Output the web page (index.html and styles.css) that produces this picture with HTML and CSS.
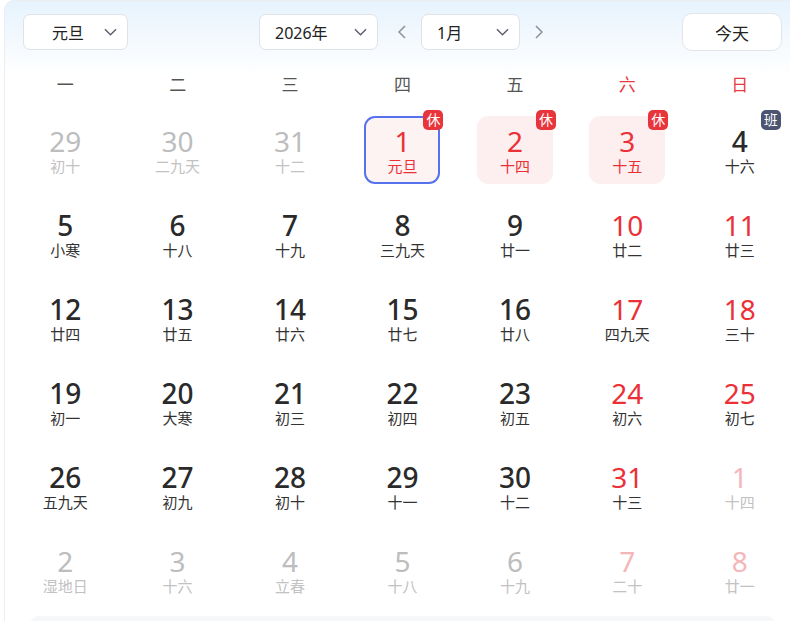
FILE: index.html
```html
<!DOCTYPE html>
<html lang="zh-CN">
<head>
  <meta charset="UTF-8" />
  <title>万年历</title>
  <link rel="stylesheet" href="styles.css">
</head>
<body>
  <div class="calendar">
    <div class="toolbar">
      <div class="select select-holiday">
        <span>元旦</span>
        <svg class="chevron" viewBox="0 0 14 8"><path d="M1 1l6 6 6-6" /></svg>
      </div>

      <div class="nav">
        <div class="select select-year">
          <span>2026年</span>
          <svg class="chevron" viewBox="0 0 14 8"><path d="M1 1l6 6 6-6" /></svg>
        </div>
        <div class="arrow arrow-prev">
          <svg viewBox="0 0 8 14"><path d="M7 1L1 7l6 6" /></svg>
        </div>
        <div class="select select-month">
          <span>1月</span>
          <svg class="chevron" viewBox="0 0 14 8"><path d="M1 1l6 6 6-6" /></svg>
        </div>
        <div class="arrow arrow-next">
          <svg viewBox="0 0 8 14"><path d="M1 1l6 6-6 6" /></svg>
        </div>
      </div>

      <button class="today-btn">今天</button>
    </div>

    <div class="weekdays">
      <div>一</div>
      <div>二</div>
      <div>三</div>
      <div>四</div>
      <div>五</div>
      <div class="weekend">六</div>
      <div class="weekend">日</div>
    </div>

    <div class="days">
      <!-- row 1 -->
      <div class="cell other"><div class="day"><span class="num">29</span><span class="lunar">初十</span></div></div>
      <div class="cell other"><div class="day"><span class="num">30</span><span class="lunar">二九天</span></div></div>
      <div class="cell other"><div class="day"><span class="num">31</span><span class="lunar">十二</span></div></div>
      <div class="cell holiday selected"><div class="day"><span class="num">1</span><span class="lunar">元旦</span><span class="badge rest">休</span></div></div>
      <div class="cell holiday"><div class="day"><span class="num">2</span><span class="lunar">十四</span><span class="badge rest">休</span></div></div>
      <div class="cell holiday"><div class="day"><span class="num">3</span><span class="lunar">十五</span><span class="badge rest">休</span></div></div>
      <div class="cell"><div class="day"><span class="num">4</span><span class="lunar">十六</span><span class="badge work">班</span></div></div>

      <!-- row 2 -->
      <div class="cell"><div class="day"><span class="num">5</span><span class="lunar">小寒</span></div></div>
      <div class="cell"><div class="day"><span class="num">6</span><span class="lunar">十八</span></div></div>
      <div class="cell"><div class="day"><span class="num">7</span><span class="lunar">十九</span></div></div>
      <div class="cell"><div class="day"><span class="num">8</span><span class="lunar">三九天</span></div></div>
      <div class="cell"><div class="day"><span class="num">9</span><span class="lunar">廿一</span></div></div>
      <div class="cell weekend"><div class="day"><span class="num">10</span><span class="lunar">廿二</span></div></div>
      <div class="cell weekend"><div class="day"><span class="num">11</span><span class="lunar">廿三</span></div></div>

      <!-- row 3 -->
      <div class="cell"><div class="day"><span class="num">12</span><span class="lunar">廿四</span></div></div>
      <div class="cell"><div class="day"><span class="num">13</span><span class="lunar">廿五</span></div></div>
      <div class="cell"><div class="day"><span class="num">14</span><span class="lunar">廿六</span></div></div>
      <div class="cell"><div class="day"><span class="num">15</span><span class="lunar">廿七</span></div></div>
      <div class="cell"><div class="day"><span class="num">16</span><span class="lunar">廿八</span></div></div>
      <div class="cell weekend"><div class="day"><span class="num">17</span><span class="lunar">四九天</span></div></div>
      <div class="cell weekend"><div class="day"><span class="num">18</span><span class="lunar">三十</span></div></div>

      <!-- row 4 -->
      <div class="cell"><div class="day"><span class="num">19</span><span class="lunar">初一</span></div></div>
      <div class="cell"><div class="day"><span class="num">20</span><span class="lunar">大寒</span></div></div>
      <div class="cell"><div class="day"><span class="num">21</span><span class="lunar">初三</span></div></div>
      <div class="cell"><div class="day"><span class="num">22</span><span class="lunar">初四</span></div></div>
      <div class="cell"><div class="day"><span class="num">23</span><span class="lunar">初五</span></div></div>
      <div class="cell weekend"><div class="day"><span class="num">24</span><span class="lunar">初六</span></div></div>
      <div class="cell weekend"><div class="day"><span class="num">25</span><span class="lunar">初七</span></div></div>

      <!-- row 5 -->
      <div class="cell"><div class="day"><span class="num">26</span><span class="lunar">五九天</span></div></div>
      <div class="cell"><div class="day"><span class="num">27</span><span class="lunar">初九</span></div></div>
      <div class="cell"><div class="day"><span class="num">28</span><span class="lunar">初十</span></div></div>
      <div class="cell"><div class="day"><span class="num">29</span><span class="lunar">十一</span></div></div>
      <div class="cell"><div class="day"><span class="num">30</span><span class="lunar">十二</span></div></div>
      <div class="cell weekend"><div class="day"><span class="num">31</span><span class="lunar">十三</span></div></div>
      <div class="cell other weekend"><div class="day"><span class="num">1</span><span class="lunar">十四</span></div></div>

      <!-- row 6 -->
      <div class="cell other"><div class="day"><span class="num">2</span><span class="lunar">湿地日</span></div></div>
      <div class="cell other"><div class="day"><span class="num">3</span><span class="lunar">十六</span></div></div>
      <div class="cell other"><div class="day"><span class="num">4</span><span class="lunar">立春</span></div></div>
      <div class="cell other"><div class="day"><span class="num">5</span><span class="lunar">十八</span></div></div>
      <div class="cell other"><div class="day"><span class="num">6</span><span class="lunar">十九</span></div></div>
      <div class="cell other weekend"><div class="day"><span class="num">7</span><span class="lunar">二十</span></div></div>
      <div class="cell other weekend"><div class="day"><span class="num">8</span><span class="lunar">廿一</span></div></div>
    </div>

    <div class="footer"></div>
  </div>
</body>
</html>
```

FILE: styles.css
```css
* {
  margin: 0;
  padding: 0;
  box-sizing: border-box;
}

body {
  background: #fff;
  overflow: hidden;
  font-family: 'Noto Sans', 'Noto Sans CJK SC', sans-serif;
  color: #222;
}

.calendar {
  width: 797px;
  margin-left: 4px;
  padding: 12px 18px 0;
  border: 1px solid #ebedf0;
  border-radius: 10px;
  background: linear-gradient(180deg, #e6f3fd 0, #f4f9fe 40px, #fff 75px);
}

/* Toolbar */
.toolbar {
  display: flex;
  justify-content: space-between;
  align-items: center;
  height: 38px;
}

.nav {
  display: flex;
  align-items: center;
}

.select {
  display: flex;
  align-items: center;
  justify-content: space-between;
  height: 36px;
  padding: 0 10px 0 15px;
  background-color: #fff;
  border: 1px solid #dfe2e7;
  border-radius: 7px;
  font-size: 16px;
  color: #222;
}

.select-holiday {
  width: 105px;
  padding-left: 28px;
}

.select-year { width: 119px; }
.select-month { width: 99px; }

.chevron {
  width: 13px;
  height: 8px;
  fill: none;
  stroke: #5a5f6a;
  stroke-width: 1.5;
}

.arrow {
  display: flex;
  justify-content: center;
  align-items: center;
  width: 24px;
  height: 36px;
}

.arrow-prev { margin: 0 7px 0 12px; }
.arrow-next { margin-left: 7px; }

.arrow svg {
  width: 8px;
  height: 14px;
  fill: none;
  stroke: #8a8f99;
  stroke-width: 1.5;
}

.today-btn {
  width: 100px;
  height: 38px;
  background-color: #fff;
  border: 1px solid #e3e5e9;
  border-radius: 10px;
  font-family: inherit;
  font-size: 17px;
  color: #222;
}

/* Weekday header */
.weekdays {
  display: grid;
  grid-template-columns: repeat(7, 1fr);
  margin: 12px -14px 5px;
  height: 40px;
  align-items: center;
  text-align: center;
  font-size: 17px;
  color: #555;
}

.weekdays .weekend { color: #ea3a40; }

/* Day grid */
.days {
  display: grid;
  grid-template-columns: repeat(7, 1fr);
  grid-auto-rows: 84px;
  margin: 0 -14px;
}

.cell {
  display: flex;
  justify-content: center;
  align-items: center;
}

.day {
  position: relative;
  display: flex;
  flex-direction: column;
  align-items: center;
  justify-content: center;
  width: 76px;
  height: 68px;
  border: 2px solid transparent;
  border-radius: 11px;
}

.num {
  font-size: 28px;
  line-height: 30px;
  font-weight: 500;
  color: #2a2a2a;
}

.lunar {
  margin-top: 1px;
  font-size: 15px;
  line-height: 18px;
  color: #333;
}

.weekend .num { color: #ec3037; font-weight: 400; }

.other .num { color: #bdbdbd; font-weight: 400; }
.other .lunar { color: #c2c2c2; }
.other.weekend .num { color: #f5b6b9; }

.holiday .day { background-color: #fdefef; }
.holiday .num { color: #ec3037; font-weight: 400; }
.holiday .lunar { color: #ec3037; }

.selected .day {
  border-color: #5672ee;
  background-color: #fdf3f3;
}

/* Rest / work badges */
.badge {
  position: absolute;
  top: -8px;
  right: -5px;
  width: 20px;
  height: 20px;
  border-radius: 5px;
  font-size: 14px;
  line-height: 20px;
  text-align: center;
  color: #fff;
}

.badge.rest { background-color: #e8343b; }
.badge.work { background-color: #4b5470; }

.footer {
  height: 40px;
  margin: 4px 6px 0;
  background-color: #f6f7f9;
  border-radius: 10px;
}
```
